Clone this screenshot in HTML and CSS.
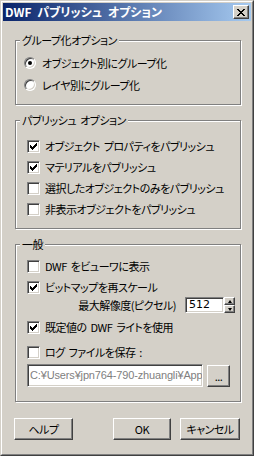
FILE: index.html
```html
<!DOCTYPE html>
<html lang="ja">
<head>
  <meta charset="UTF-8">
  <title>DWF パブリッシュ オプション</title>
  <link rel="stylesheet" href="styles.css">
</head>
<body>
  <div class="window">
    <div class="frame">
      <div class="titlebar">
        <span class="title">DWF パブリッシュ オプション</span>
        <button class="close">
          <svg width="8" height="7" viewBox="0 0 8 7" shape-rendering="crispEdges">
            <rect x="0" y="0" width="2" height="1"/><rect x="6" y="0" width="2" height="1"/>
            <rect x="1" y="1" width="2" height="1"/><rect x="5" y="1" width="2" height="1"/>
            <rect x="2" y="2" width="4" height="1"/>
            <rect x="3" y="3" width="2" height="1"/>
            <rect x="2" y="4" width="4" height="1"/>
            <rect x="1" y="5" width="2" height="1"/><rect x="5" y="5" width="2" height="1"/>
            <rect x="0" y="6" width="2" height="1"/><rect x="6" y="6" width="2" height="1"/>
          </svg>
        </button>
      </div>

      <div class="content">
        <div class="group group-grouping">
          <div class="group-title">グループ化オプション</div>
          <div class="row radio-row first"><span class="radio on"></span>オブジェクト別にグループ化</div>
          <div class="row radio-row"><span class="radio"></span>レイヤ別にグループ化</div>
        </div>

        <div class="group group-publish">
          <div class="group-title">パブリッシュ オプション</div>
          <div class="row check-row first"><span class="check on"></span>オブジェクト プロパティをパブリッシュ</div>
          <div class="row check-row"><span class="check on"></span>マテリアルをパブリッシュ</div>
          <div class="row check-row"><span class="check"></span>選択したオブジェクトのみをパブリッシュ</div>
          <div class="row check-row"><span class="check"></span>非表示オブジェクトをパブリッシュ</div>
        </div>

        <div class="group group-general">
          <div class="group-title">一般</div>
          <div class="row check-row first"><span class="check"></span>DWF をビューワに表示</div>
          <div class="row check-row"><span class="check on"></span>ビットマップを再スケール</div>
          <div class="res-row">
            <span class="res-label">最大解像度(ピクセル)</span>
            <span class="field res-field">512</span>
            <span class="spinner">
              <span class="spin-btn"><span class="arrow up"></span></span>
              <span class="spin-btn"><span class="arrow down"></span></span>
            </span>
          </div>
          <div class="row check-row light"><span class="check on"></span>既定値の DWF ライトを使用</div>
          <div class="row check-row log"><span class="check"></span>ログ ファイルを保存 :</div>
          <div class="path-row">
            <span class="field path-field">C:¥Users¥jpn764-790-zhuangli¥App</span>
            <button class="btn browse">...</button>
          </div>
        </div>

        <div class="buttons">
          <button class="btn help">ヘルプ</button>
          <button class="btn ok">OK</button>
          <button class="btn cancel">キャンセル</button>
        </div>
      </div>
    </div>
  </div>

  <script>
    // classic 7x7 tick, drawn once per checked box
    document.querySelectorAll('.check.on').forEach(box => {
      const cols = [2, 3, 4, 3, 2, 1, 0];
      let rects = '';
      cols.forEach((y, x) => { rects += '<rect x="' + x + '" y="' + y + '" width="1" height="3"/>'; });
      box.innerHTML = '<svg width="7" height="7" viewBox="0 0 7 7" shape-rendering="crispEdges">' + rects + '</svg>';
    });
  </script>
</body>
</html>
```

FILE: styles.css
```css
:root {
  --face: #d4d0c8;
  --shadow: #808080;
  --dark: #404040;
  --light: #ffffff;
}

* {
  box-sizing: border-box;
}

body {
  margin: 0;
  font-family: "Noto Sans CJK JP", "Liberation Sans", sans-serif;
  font-size: 11px;
  letter-spacing: -0.5px;
  word-spacing: 2px;
  font-feature-settings: "palt";
  color: #000;
  background: var(--face);
}

.window {
  width: 254px;
  height: 456px;
  border: 1px solid;
  border-color: var(--face) var(--dark) var(--dark) var(--face);
}

.frame {
  height: 100%;
  border: 1px solid;
  border-color: var(--light) var(--shadow) var(--shadow) var(--light);
  padding: 1px;
  background: var(--face);
}

.titlebar {
  height: 18px;
  display: flex;
  align-items: center;
  justify-content: space-between;
  padding: 0 2px;
  background: linear-gradient(to right, #0a246a, #a6caf0);
}

.title {
  color: var(--light);
  font-weight: bold;
  font-size: 12px;
  letter-spacing: 0;
  word-spacing: 3px;
  line-height: 14px;
}

.close {
  width: 16px;
  height: 14px;
  padding: 0;
  display: flex;
  align-items: center;
  justify-content: center;
  background: var(--face);
  border: 1px solid;
  border-color: var(--light) var(--dark) var(--dark) var(--light);
  box-shadow: inset -1px -1px var(--shadow);
}

.content {
  padding-top: 19px;
}

.group {
  width: 226px;
  margin-left: 12px;
  border: 1px solid var(--shadow);
  box-shadow: inset 1px 1px var(--light), 1px 1px var(--light);
}

.group + .group {
  margin-top: 15px;
}

.group-title {
  width: fit-content;
  height: 14px;
  line-height: 14px;
  margin: -8px 0 0 4px;
  padding: 0 2px;
  background: var(--face);
}

.row {
  display: flex;
  align-items: center;
  height: 13px;
  line-height: 13px;
  white-space: nowrap;
}

.radio-row {
  gap: 6px;
  padding-left: 8px;
  height: 12px;
  margin-top: 10px;
}

.group-grouping {
  padding-bottom: 13px;
}

.check-row {
  gap: 5px;
  padding-left: 11px;
  margin-top: 8px;
}

.check-row.first {
  margin-top: 13px;
}

.group-publish {
  padding-bottom: 12px;
}

.group-general .check-row.first {
  margin-top: 9px;
}

.radio {
  width: 12px;
  height: 12px;
  flex: none;
  display: flex;
  align-items: center;
  justify-content: center;
  border-radius: 50%;
  border: 1px solid;
  border-color: var(--shadow) var(--light) var(--light) var(--shadow);
  box-shadow: inset 1px 1px var(--dark), inset -1px -1px var(--face);
  background: var(--light);
}

.radio.on::after {
  content: '';
  width: 4px;
  height: 4px;
  border-radius: 50%;
  background: #000;
}

.check {
  width: 13px;
  height: 13px;
  flex: none;
  display: flex;
  align-items: center;
  justify-content: center;
  border: 1px solid;
  border-color: var(--shadow) var(--light) var(--light) var(--shadow);
  box-shadow: inset 1px 1px var(--dark), inset -1px -1px var(--face);
  background: var(--light);
}

.field {
  display: block;
  border: 1px solid;
  border-color: var(--shadow) var(--light) var(--light) var(--shadow);
  box-shadow: inset 1px 1px var(--dark), inset -1px -1px var(--face);
  background: var(--light);
  white-space: nowrap;
  overflow: hidden;
  letter-spacing: 0;
}

.res-row {
  display: flex;
  align-items: center;
  height: 16px;
  margin-top: 3px;
}

.res-label {
  width: 160px;
  margin-right: 9px;
  text-align: right;
  line-height: 16px;
}

.res-field {
  width: 39px;
  height: 16px;
  padding-left: 3px;
  line-height: 13px;
  font-family: "DejaVu Sans", sans-serif;
  font-size: 11px;
}

.spinner {
  width: 11px;
  height: 16px;
  display: flex;
  flex-direction: column;
}

.spin-btn {
  height: 8px;
  display: flex;
  align-items: center;
  justify-content: center;
  background: var(--face);
  border: 1px solid;
  border-color: var(--light) var(--dark) var(--dark) var(--light);
  box-shadow: inset -1px -1px var(--shadow);
}

.arrow {
  width: 0;
  height: 0;
  border-left: 2.5px solid transparent;
  border-right: 2.5px solid transparent;
}

.arrow.up {
  border-bottom: 3px solid #000;
}

.arrow.down {
  border-top: 3px solid #000;
}

.check-row.light {
  margin-top: 8px;
}

.check-row.log {
  margin-top: 12px;
}

.group-general {
  padding-bottom: 14px;
}

.path-row {
  display: flex;
  align-items: center;
  gap: 4px;
  margin-top: 5px;
  padding-left: 11px;
}

.path-field {
  width: 176px;
  height: 23px;
  padding-left: 2px;
  line-height: 21px;
  color: var(--shadow);
  font-family: "Liberation Sans", sans-serif;
  font-size: 11px;
  letter-spacing: -0.15px;
  word-spacing: 0;
}

.btn {
  font-family: inherit;
  font-size: 11px;
  letter-spacing: -0.5px;
  font-feature-settings: "palt";
  padding: 0;
  color: #000;
  background: var(--face);
  border: 1px solid;
  border-color: var(--light) var(--dark) var(--dark) var(--light);
  box-shadow: inset -1px -1px var(--shadow);
}

.browse {
  width: 23px;
  height: 22px;
  line-height: 20px;
}

.buttons {
  display: flex;
  margin-top: 16px;
  padding-left: 11px;
}

.buttons .btn {
  height: 22px;
  width: 59px;
}

.buttons .ok {
  width: 58px;
  margin-left: 40px;
}

.buttons .cancel {
  width: 60px;
  margin-left: 9px;
}
```
